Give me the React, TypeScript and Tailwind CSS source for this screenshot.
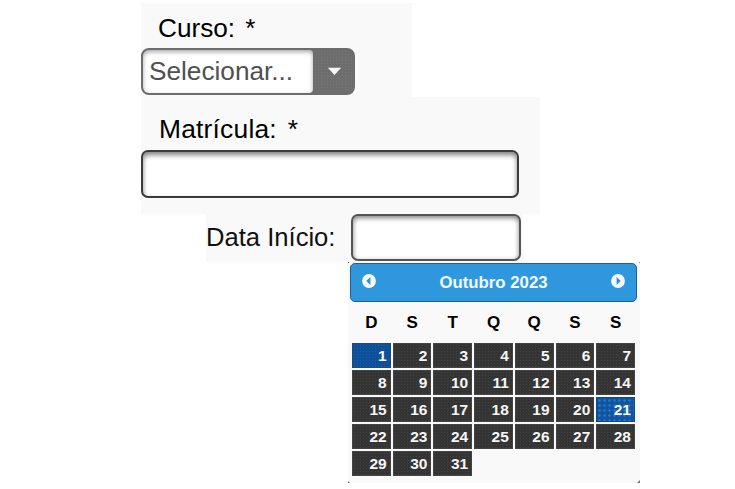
import React from "react";

const weekdays = ["D", "S", "T", "Q", "Q", "S", "S"];
const days = Array.from({ length: 31 }, (_, i) => i + 1);

const weave =
  "bg-[image:radial-gradient(circle_at_center,rgba(255,255,255,0.07)_0.6px,transparent_1px)] bg-[size:3px_3px]";
const dots =
  "bg-[image:radial-gradient(circle_at_center,rgba(90,165,235,0.45)_0.7px,transparent_1.6px)] bg-[size:5px_5px]";

function dayClass(day: number) {
  if (day === 1) return `bg-[#0c509a] border-[#1c4a7c] ${weave}`;
  if (day === 21) return `bg-[#0f55a2] border-[#0c4a90] ${dots}`;
  return `bg-[#343434] border-[#444444] ${weave}`;
}

function Arrow({ next = false }: { next?: boolean }) {
  return (
    <svg width="14" height="14" viewBox="0 0 14 14" className={next ? "mb-[3px]" : "mb-[3px] -scale-x-100"}>
      <circle cx="7" cy="7" r="6.9" fill="#f8fcff" />
      <path d="M5.6 2.9 9.7 7 5.6 11.1Z" fill="#2f8fd0" />
    </svg>
  );
}

export default function App() {
  return (
    <div className="h-[489px] w-[735px] overflow-hidden bg-white pt-[3px] font-['Liberation_Sans',Arial,sans-serif] text-black">
      <section className="ml-[141px] h-[94px] w-[271px] bg-[#f9f9f9]">
        <div className="flex h-[45px] items-start pl-[17px] pt-[10px] text-[26.2px] leading-[30px]">
          <span>Curso:</span>
          <span className="ml-[10px]">*</span>
        </div>
        <div className={`flex h-[47px] w-[214px] rounded-[8px] border-2 border-[#6d6d6d] bg-[#6d6d6d] ${weave}`}>
          <div className="h-[43px] w-[170px] rounded-l-[6px] rounded-r-[4px] bg-white pl-[6px] text-[26.2px] leading-[43px] text-[#505050] shadow-[inset_0_2px_4px_rgba(0,0,0,0.35)]">
            Selecionar...
          </div>
          <div className="flex flex-1 items-center justify-center pl-[3px]">
            <svg width="15" height="9" viewBox="0 0 15 9">
              <path d="M0.8 0.8h13.4L7.5 8Z" fill="#f7f7f7" />
            </svg>
          </div>
        </div>
      </section>

      <section className="ml-[141px] h-[117px] w-[399px] bg-[#f9f9f9]">
        <div className="flex h-[53px] items-start pl-[18px] pt-[17px] text-[26.4px] leading-[30px]">
          <span className="tracking-[0.2px]">Matrícula:</span>
          <span className="ml-[11px]">*</span>
        </div>
        <div className="h-[48px] w-[378px] rounded-[7px] border-2 border-[#3b3b3d] bg-white shadow-[inset_0_3px_5px_rgba(0,0,0,0.5)]" />
      </section>

      <section className="ml-[206px] flex h-[48px] w-[317px] bg-[#f9f9f9]">
        <div className="w-[145px] whitespace-nowrap pt-[8px] text-[25.6px] leading-[30px] text-[#111]">Data Início:</div>
        <div className="h-[47px] w-[170px] rounded-[7px] border-2 border-[#555555] bg-white shadow-[inset_0_2px_5px_rgba(0,0,0,0.5)]" />
      </section>

      <section className="relative ml-[348px] h-[221px] w-[292px] bg-[#f9f9f9] pl-[2px] pt-px">
        <header className="flex h-[39px] w-[287px] items-center justify-between rounded-[5px] border border-[#235f91] bg-[#2f98dc] px-[11px] text-[16.8px] font-bold text-[#f3faff]">
          <Arrow />
          <span>Outubro 2023</span>
          <Arrow next />
        </header>
        <div className="ml-[2px] grid w-[283px] grid-cols-7 gap-x-[2px] pt-[11px] text-center text-[17px] font-bold leading-[20px]">
          {weekdays.map((name, i) => (
            <span key={i}>{name}</span>
          ))}
        </div>
        <div className="ml-[2px] mt-[10px] grid w-[283px] grid-cols-7 gap-x-[2px] gap-y-[2px]">
          {days.map((day) => (
            <div
              key={day}
              className={`h-[25px] border pr-[3px] text-right text-[15.5px] font-bold leading-[23px] text-[#f6f6f6] ${dayClass(day)}`}
            >
              {day}
            </div>
          ))}
        </div>
        <i className="absolute left-0 top-0 size-px bg-[#666]" />
        <i className="absolute right-0 top-0 size-px bg-[#888]" />
        <i className="absolute bottom-0 left-0 h-[2px] w-[2px] bg-[#777] [clip-path:polygon(0_0,100%_100%,0_100%)]" />
        <i className="absolute bottom-0 right-0 h-[3px] w-[3px] bg-[#777] [clip-path:polygon(100%_0,100%_100%,0_100%)]" />
      </section>
    </div>
  );
}
